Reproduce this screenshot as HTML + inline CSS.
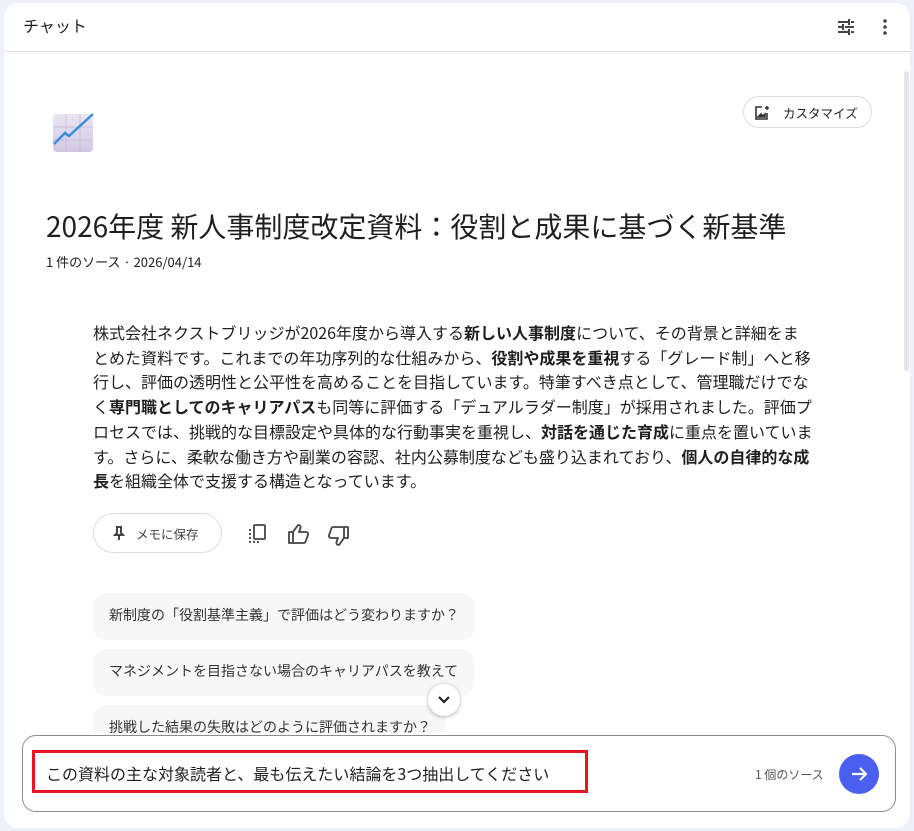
<!DOCTYPE html>
<html><head><meta charset="utf-8"><style>
*{box-sizing:border-box;margin:0;padding:0}
body{width:914px;height:831px;background:#eef0fa;font-family:"Liberation Sans","Noto Sans CJK JP",sans-serif;color:#1f1f1f;position:relative;overflow:hidden}
.card{position:absolute;left:4px;top:3px;width:906px;height:825px;background:#fff;border-radius:14px;overflow:hidden}
.hdr{height:49px;border-bottom:1px solid #dde0e8;position:relative}
.hdr .t{position:absolute;left:19px;top:10px;font-size:16px;font-family:"Noto Sans CJK JP",sans-serif}
.abs{position:absolute}
.body{position:absolute;left:89px;top:317px;font-size:16px;line-height:24.7px;white-space:nowrap;font-family:"Noto Sans CJK JP",sans-serif;color:#1f1f1f}
.body b{font-weight:700}
.chip{position:absolute;left:89px;background:#f7f7f8;border-radius:14px;height:47px;font-size:14px;font-family:"Noto Sans CJK JP",sans-serif;padding:12px 16px;color:#333;white-space:nowrap}
</style></head><body>
<div class="card">
 <div class="hdr"><div class="t">チャット</div>
  <svg class="abs" style="left:832px;top:14px" width="20" height="20" viewBox="0 0 20 20" fill="none" stroke="#444" stroke-width="2"><path d="M2 5h10M15 5h3M13 2v6M2 10h4M9 10h9M7 7v6M2 15h10M15 15h3M13 12v6"/></svg>
  <svg class="abs" style="left:878px;top:14px" width="6" height="20"><circle cx="3" cy="4" r="1.8" fill="#444"/><circle cx="3" cy="10" r="1.8" fill="#444"/><circle cx="3" cy="16" r="1.8" fill="#444"/></svg>
 </div>
 <div class="abs" style="left:900px;top:68px;width:5px;height:300px;background:#e6e6e6;border-radius:3px"></div>
 <svg class="abs" style="left:49px;top:108px" width="42" height="42" viewBox="0 0 42 42"><defs><linearGradient id="g" x1="0" y1="0" x2="0" y2="1"><stop offset="0" stop-color="#ebe6f2"/><stop offset="1" stop-color="#d2c8e6"/></linearGradient></defs><rect x="0" y="3" width="40" height="38" rx="4" fill="url(#g)"/><path d="M13 3v38M27 3v38M0 16h40M0 29h40" stroke="#c8bfd6" stroke-width="1"/><path d="M1 33l11-11 4 3 24-22" stroke="#3a8fd6" stroke-width="2.5" fill="none"/></svg>
 <div class="abs" style="left:739px;top:93px;width:129px;height:32px;border:1px solid #dadce4;border-radius:16px;font-size:12.5px;font-family:'Noto Sans CJK JP',sans-serif;padding:6px 0 0 39px">カスタマイズ</div>
 <svg class="abs" style="left:750px;top:102px" width="16" height="16" viewBox="0 0 16 16" fill="none" stroke="#333" stroke-width="1.6"><path d="M8 2H2v12h11V8"/><path d="M4 12l3-3 2 2 2-2v3z" fill="#333"/><path d="M13 1v4M11 3h4" /></svg>
 <div class="abs" style="left:42px;top:203px;font-size:28px;font-family:'Noto Sans CJK JP',sans-serif;white-space:nowrap;line-height:40px">2026年度 新人事制度改定資料：役割と成果に基づく新基準</div>
 <div class="abs" style="left:42px;top:249px;font-size:13px;font-family:'Noto Sans CJK JP',sans-serif">1 件のソース · 2026/04/14</div>
 <div class="body">株式会社ネクストブリッジが2026年度から導入する<b>新しい人事制度</b>について、その背景と詳細をま<br>とめた資料です。これまでの年功序列的な仕組みから、<b>役割や成果を重視</b>する「グレード制」へと移<br>行し、評価の透明性と公平性を高めることを目指しています。特筆すべき点として、管理職だけでな<br>く<b>専門職としてのキャリアパス</b>も同等に評価する「デュアルラダー制度」が採用されました。評価プ<br>ロセスでは、挑戦的な目標設定や具体的な行動事実を重視し、<b>対話を通じた育成</b>に重点を置いていま<br>す。さらに、柔軟な働き方や副業の容認、社内公募制度なども盛り込まれており、<b>個人の自律的な成</b><br><b>長</b>を組織全体で支援する構造となっています。</div>
 <div class="abs" style="left:89px;top:510px;width:129px;height:40px;border:1px solid #dadce4;border-radius:20px;font-size:12.5px;font-family:'Noto Sans CJK JP',sans-serif;color:#444;padding:10px 0 0 42px">メモに保存</div>
 <svg class="abs" style="left:108px;top:522px" width="14" height="16" viewBox="0 0 14 16" fill="none" stroke="#333" stroke-width="1.8"><path d="M4 2h6M5 2v6l-2 2h8L9 8V2M7 10v5"/></svg>
 <svg class="abs" style="left:243px;top:520px" width="22" height="22" viewBox="0 0 22 22" fill="none" stroke="#444" stroke-width="1.8"><rect x="7" y="2" width="11" height="14" rx="1"/><path d="M3 6v13h10" stroke-dasharray="2 2"/></svg>
 <svg class="abs" style="left:283px;top:520px" width="24" height="22" viewBox="0 0 24 22" fill="none" stroke="#444" stroke-width="1.8" stroke-linejoin="round"><path d="M2 9h4v11H2zM6 9l5-7c2 0 3 1 2.5 3L12 9h7c1.5 0 2.5 1.3 2 2.8l-2.5 7c-.3.8-1 1.2-1.8 1.2H6"/></svg>
 <svg class="abs" style="left:322px;top:522px" width="24" height="22" viewBox="0 0 24 22" fill="none" stroke="#444" stroke-width="1.8" stroke-linejoin="round"><path d="M18 2h4v11h-4zM18 13l-5 7c-2 0-3-1-2.5-3L12 13H5c-1.5 0-2.5-1.3-2-2.8l2.5-7C5.8 2.4 6.5 2 7.3 2H18"/></svg>
 <div class="chip" style="top:590px;width:382px">新制度の「役割基準主義」で評価はどう変わりますか？</div>
 <div class="chip" style="top:646px;width:381px">マネジメントを目指さない場合のキャリアパスを教えて</div>
 <div class="chip" style="top:702px;width:352px">挑戦した結果の失敗はどのように評価されますか？</div>
 <div class="abs" style="left:424px;top:681px;width:32px;height:32px;border-radius:50%;background:#fff;box-shadow:0 1px 4px rgba(0,0,0,.3)"></div>
 <svg class="abs" style="left:433px;top:691px" width="14" height="12" viewBox="0 0 14 12" fill="none" stroke="#222" stroke-width="2.2"><path d="M2 3l5 5 5-5"/></svg>
 <div class="abs" style="left:0;top:730px;width:906px;height:95px;background:#fff"></div>
 <div class="abs" style="left:18px;top:732px;width:874px;height:77px;border:1px solid #8c8c8c;border-radius:14px;background:#fff"></div>
 <div class="abs" style="left:28px;top:747px;width:556px;height:43px;border:3px solid #e6151f"></div>
 <div class="abs" style="left:42px;top:758px;font-size:16px;font-family:'Noto Sans CJK JP',sans-serif;white-space:nowrap">この資料の主な対象読者と、最も伝えたい結論を3つ抽出してください</div>
 <div class="abs" style="left:751px;top:763px;font-size:12px;color:#555;font-family:'Noto Sans CJK JP',sans-serif">1 個のソース</div>
 <div class="abs" style="left:835px;top:751px;width:40px;height:40px;border-radius:50%;background:#4a5ef0"></div>
 <svg class="abs" style="left:845px;top:761px" width="20" height="20" viewBox="0 0 20 20" fill="none" stroke="#fff" stroke-width="2.2"><path d="M3 10h14M11 4l6 6-6 6"/></svg>
</div>
</body></html>
